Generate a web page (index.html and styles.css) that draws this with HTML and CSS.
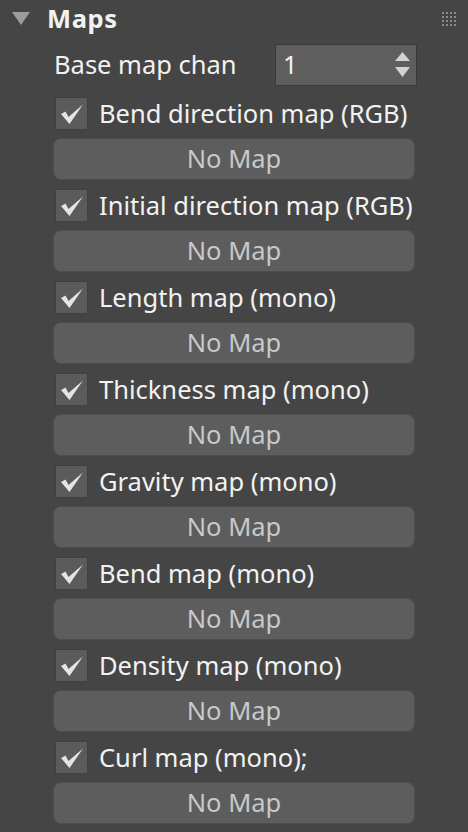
FILE: index.html
```html
<!DOCTYPE html>
<html>
<head>
<meta charset="utf-8">
<link rel="stylesheet" href="styles.css">
</head>
<body>
<div class="panel">
  <div class="header">
    <svg class="caret" width="18" height="13" viewBox="0 0 18 13"><polygon points="0,0 18,0 9,13" fill="#9c9c9c"/></svg>
    <span class="title">Maps</span>
    <svg class="grip" width="14" height="14" viewBox="0 0 14 14" fill="#8a8a8a">
      <rect x="0" y="0" width="2" height="2"/><rect x="4" y="0" width="2" height="2"/><rect x="8" y="0" width="2" height="2"/><rect x="12" y="0" width="2" height="2"/>
      <rect x="0" y="4" width="2" height="2"/><rect x="4" y="4" width="2" height="2"/><rect x="8" y="4" width="2" height="2"/><rect x="12" y="4" width="2" height="2"/>
      <rect x="0" y="8" width="2" height="2"/><rect x="4" y="8" width="2" height="2"/><rect x="8" y="8" width="2" height="2"/><rect x="12" y="8" width="2" height="2"/>
      <rect x="0" y="12" width="2" height="2"/><rect x="4" y="12" width="2" height="2"/><rect x="8" y="12" width="2" height="2"/><rect x="12" y="12" width="2" height="2"/>
    </svg>
  </div>
  <div class="spin-row">
    <span class="spin-label">Base map chan</span>
    <div class="spinner">
      <span class="spin-value">1</span>
      <svg class="spin-arrows" width="15" height="26" viewBox="0 0 15 26" fill="#d2d2d2">
        <polygon points="7.5,0 15,9 0,9"/>
        <polygon points="0,15 15,15 7.5,25"/>
      </svg>
    </div>
  </div>
  <div class="maps">
    <div class="group">
      <label class="check-row"><span class="checkbox"><svg viewBox="0 0 33 33" width="33" height="33"><path d="M6 17 L10.5 14.5 L13.5 20 L28 7.5 L14.5 27 Z" fill="#e4e4e4"/></svg></span><span class="label">Bend direction map (RGB)</span></label>
      <div class="map-btn">No Map</div>
    </div>
    <div class="group">
      <label class="check-row"><span class="checkbox"><svg viewBox="0 0 33 33" width="33" height="33"><path d="M6 17 L10.5 14.5 L13.5 20 L28 7.5 L14.5 27 Z" fill="#e4e4e4"/></svg></span><span class="label">Initial direction map (RGB)</span></label>
      <div class="map-btn">No Map</div>
    </div>
    <div class="group">
      <label class="check-row"><span class="checkbox"><svg viewBox="0 0 33 33" width="33" height="33"><path d="M6 17 L10.5 14.5 L13.5 20 L28 7.5 L14.5 27 Z" fill="#e4e4e4"/></svg></span><span class="label">Length map (mono)</span></label>
      <div class="map-btn">No Map</div>
    </div>
    <div class="group">
      <label class="check-row"><span class="checkbox"><svg viewBox="0 0 33 33" width="33" height="33"><path d="M6 17 L10.5 14.5 L13.5 20 L28 7.5 L14.5 27 Z" fill="#e4e4e4"/></svg></span><span class="label">Thickness map (mono)</span></label>
      <div class="map-btn">No Map</div>
    </div>
    <div class="group">
      <label class="check-row"><span class="checkbox"><svg viewBox="0 0 33 33" width="33" height="33"><path d="M6 17 L10.5 14.5 L13.5 20 L28 7.5 L14.5 27 Z" fill="#e4e4e4"/></svg></span><span class="label">Gravity map (mono)</span></label>
      <div class="map-btn">No Map</div>
    </div>
    <div class="group">
      <label class="check-row"><span class="checkbox"><svg viewBox="0 0 33 33" width="33" height="33"><path d="M6 17 L10.5 14.5 L13.5 20 L28 7.5 L14.5 27 Z" fill="#e4e4e4"/></svg></span><span class="label">Bend map (mono)</span></label>
      <div class="map-btn">No Map</div>
    </div>
    <div class="group">
      <label class="check-row"><span class="checkbox"><svg viewBox="0 0 33 33" width="33" height="33"><path d="M6 17 L10.5 14.5 L13.5 20 L28 7.5 L14.5 27 Z" fill="#e4e4e4"/></svg></span><span class="label">Density map (mono)</span></label>
      <div class="map-btn">No Map</div>
    </div>
    <div class="group">
      <label class="check-row"><span class="checkbox"><svg viewBox="0 0 33 33" width="33" height="33"><path d="M6 17 L10.5 14.5 L13.5 20 L28 7.5 L14.5 27 Z" fill="#e4e4e4"/></svg></span><span class="label">Curl map (mono);</span></label>
      <div class="map-btn">No Map</div>
    </div>
  </div>
</div>
</body>
</html>
```

FILE: styles.css
```css
html, body {
  margin: 0;
  padding: 0;
  background: #454545;
}
body {
  width: 468px;
  height: 832px;
  overflow: hidden;
  font-family: "Noto Sans", "Liberation Sans", Arial, sans-serif;
  font-size: 25.5px;
  color: #f2f2f2;
}
.panel {
  display: flex;
  flex-direction: column;
}
.header {
  display: flex;
  align-items: center;
  height: 38px;
  padding-left: 12px;
  padding-right: 12px;
}
.caret {
  flex: none;
  margin-top: -2px;
}
.title {
  font-weight: bold;
  margin-left: 17px;
  flex: 1;
  line-height: 30px;
  letter-spacing: 0.6px;
  margin-top: -2px;
}
.grip {
  flex: none;
}
.spin-row {
  display: flex;
  align-items: center;
  margin-top: 6px;
  padding-left: 54px;
  height: 42px;
}
.spin-label {
  width: 221px;
  line-height: 30px;
  margin-top: -2px;
}
.spinner {
  box-sizing: border-box;
  width: 142px;
  height: 42px;
  background: #5e5e5e;
  border: 1px solid #3a3a3a;
  display: flex;
  align-items: center;
  padding-left: 7px;
  padding-right: 6px;
}
.spin-value {
  flex: 1;
  line-height: 30px;
  margin-top: -2px;
}
.spin-arrows {
  flex: none;
}
.maps {
  display: flex;
  flex-direction: column;
  margin-top: 11px;
  padding-left: 53px;
  width: 362px;
}
.group {
  display: flex;
  flex-direction: column;
  gap: 8px;
  margin-bottom: 9px;
}
.check-row {
  display: flex;
  align-items: center;
  height: 33px;
  padding-left: 2px;
}
.checkbox {
  box-sizing: border-box;
  width: 33px;
  height: 33px;
  background: #5b5b5b;
  border: 1px solid #404040;
  flex: none;
  display: flex;
}
.checkbox svg {
  margin: -1px;
}
.label {
  margin-left: 11px;
  line-height: 30px;
  white-space: nowrap;
  margin-top: -2px;
}
.map-btn {
  box-sizing: border-box;
  height: 42px;
  border-radius: 8px;
  background: #5d5d5d;
  border: 1px solid #4e4e4e;
  color: #c9c9c9;
  display: flex;
  align-items: center;
  justify-content: center;
  line-height: 30px;
  padding-bottom: 2px;
}
```
